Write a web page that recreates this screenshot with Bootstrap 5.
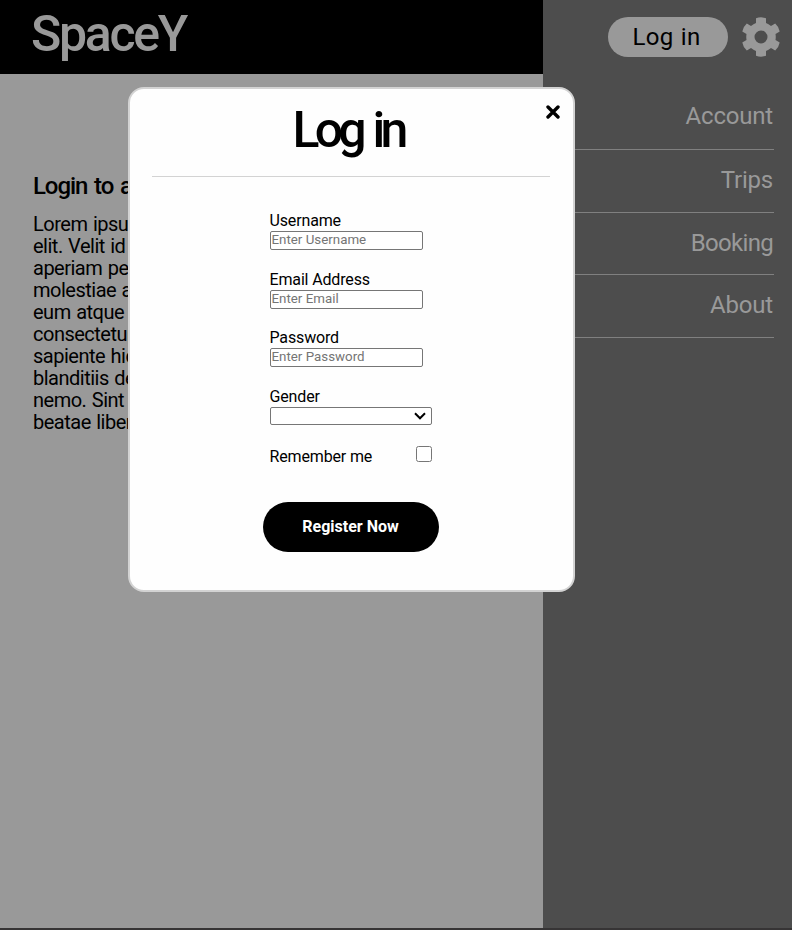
<!DOCTYPE html>
<html lang="en">
<head>
<meta charset="utf-8">
<meta name="viewport" content="width=device-width, initial-scale=1">
<title>SpaceY</title>
<link href="https://cdn.jsdelivr.net/npm/bootstrap@5.3.0/dist/css/bootstrap.min.css" rel="stylesheet">
<style>
body{font-family:Roboto,"Liberation Sans",sans-serif;color:#000;background:#999;line-height:1}
.page{height:930px;border-bottom:2px solid #363435}
.main-col{width:543px}
.topbar{height:74px;padding:6px 0 0 31px}
.brand{font-size:50px;line-height:56px;font-weight:500;letter-spacing:-2.3px;color:#999}
.intro{padding:99px 0 0 33px}
.intro h2{font-size:24px;line-height:26px;font-weight:500;letter-spacing:-1.1px;word-spacing:2px;margin-bottom:14px}
.intro p{font-size:20px;line-height:22px;letter-spacing:-.5px;word-spacing:1px}
.side{width:249px;background:#4d4d4d;padding:17px 11px 0 0}
.top-actions{gap:13px}
.login-pill{width:120px;height:40px;background:#999;font-size:24px;letter-spacing:.3px;word-spacing:1px;line-height:38px;padding:0 3px 0 0}
.side-nav{margin:30px 7px 0 0}
.side-nav a{height:62.67px;padding:16px 1px 0 0;font-size:24px;line-height:28px;letter-spacing:-.2px;color:#999;border-bottom:1px solid #808080}
.side-nav a:first-child{height:63px;padding-top:15px}
.side-nav a:nth-child(3){letter-spacing:-.7px}
.overlay{padding:87px 0 0 128px}
.dialog-box{width:447px;height:505px;border:2px solid #d3d3d3;border-radius:16px;background:#fefefe;padding:0 23px 0 22px}
.dialog-head{height:88px;border-bottom:1px solid #d3d3d3;padding-top:13px}
.dialog-head h1{font-size:50px;line-height:56px;font-weight:500;letter-spacing:-4.8px;word-spacing:3px;margin:0;padding-right:6px}
.close-x{top:15.500px;right:13.500px;line-height:0}
.fields{margin:34px 0 0 117.500px;width:162.500px;font-size:16px}
.fields label{display:block;height:20px;line-height:20px;letter-spacing:-.15px}
.field{height:58.67px}
.field input,.field select{display:block;font-size:13.333px;height:19px;margin:0;background:#fff;border:1px solid #767676;border-radius:2px}
.field input{width:153.500px;padding:0 1px 2px}
.field input::placeholder{color:#757575}
.field select{width:162.500px;height:18px;appearance:none;padding:0 5px;background:#fff url("data:image/svg+xml,%3Csvg xmlns='http://www.w3.org/2000/svg' width='12' height='8' viewBox='0 0 12 8'%3E%3Cpath d='M1 1.300 6 6.300 11 1.300' fill='none' stroke='%23000' stroke-width='2'/%3E%3C/svg%3E") no-repeat right 5px center}
.remember label{padding-top:1px}
.remember input{width:16px;height:16px;margin:0}
.register{width:176px;height:50px;margin:36px 0 0 111px;font-size:16px;font-weight:700;letter-spacing:0;padding:0 1px 0 0}
</style>
<script src="https://cdn.jsdelivr.net/npm/bootstrap@5.3.0/dist/js/bootstrap.bundle.min.js"></script>
</head>
<body class="overflow-hidden">
<div class="page d-flex">
  <main class="main-col">
    <header class="topbar bg-black"><div class="brand">SpaceY</div></header>
    <section class="intro text-nowrap">
      <h2>Login to access</h2>
      <p class="mb-0">Lorem ipsum dolor<br>elit. Velit id<br>aperiam per<br>molestiae a<br>eum atque<br>consectetur<br>sapiente hic<br>blanditiis de<br>nemo. Sint<br>beatae libero</p>
    </section>
  </main>
  <aside class="side">
    <div class="top-actions d-flex justify-content-end align-items-center">
      <button class="login-pill border-0 rounded-pill text-black">Log in</button>
      <svg class="gear" width="40" height="40" viewBox="0 0 40 40" aria-label="Settings"><path fill="#999" fill-rule="evenodd" d="M15 1.200Q20-.5 25 1.200V6Q27.500 7 30 9.100L34.200 6.600Q38 10 38.700 14.500L34.500 17Q35 20 34.500 23L38.700 25.500Q38 30 34.200 33.400L30 30.900Q27.500 33 25 34V38.800Q20 40.500 15 38.800V34Q12.500 33 10 30.900L5.800 33.400Q2 30 1.300 25.500L5.500 23Q5 20 5.500 17L1.300 14.500Q2 10 5.800 6.600L10 9.100Q12.500 7 15 6ZM20 13.500A6.500 6.500 0 1 0 20 26.500A6.500 6.500 0 1 0 20 13.500Z"/></svg>
    </div>
    <nav class="side-nav d-flex flex-column text-end">
      <a class="text-decoration-none">Account</a>
      <a class="text-decoration-none">Trips</a>
      <a class="text-decoration-none">Booking</a>
      <a class="text-decoration-none">About</a>
    </nav>
  </aside>
</div>
<div class="overlay position-fixed top-0 start-0">
  <form class="dialog-box position-relative">
    <div class="dialog-head text-center"><h1>Log in</h1></div>
    <a class="close-x position-absolute" aria-label="Close"><svg width="14" height="14" viewBox="0 0 14 14"><path d="M2 2 12 12M12 2 2 12" stroke="#000" stroke-width="3.400" stroke-linecap="round"/></svg></a>
    <div class="fields">
      <div class="field"><label for="u">Username</label><input id="u" type="text" placeholder="Enter Username"></div>
      <div class="field"><label for="e">Email Address</label><input id="e" type="text" placeholder="Enter Email"></div>
      <div class="field"><label for="p">Password</label><input id="p" type="password" placeholder="Enter Password"></div>
      <div class="field"><label for="g">Gender</label><select id="g"><option></option><option>Male</option><option>Female</option></select></div>
      <div class="remember d-flex justify-content-between"><label for="r">Remember me</label><input id="r" type="checkbox"></div>
    </div>
    <button type="button" class="register d-block border-0 rounded-pill bg-black text-white">Register Now</button>
  </form>
</div>
</body>
</html>
